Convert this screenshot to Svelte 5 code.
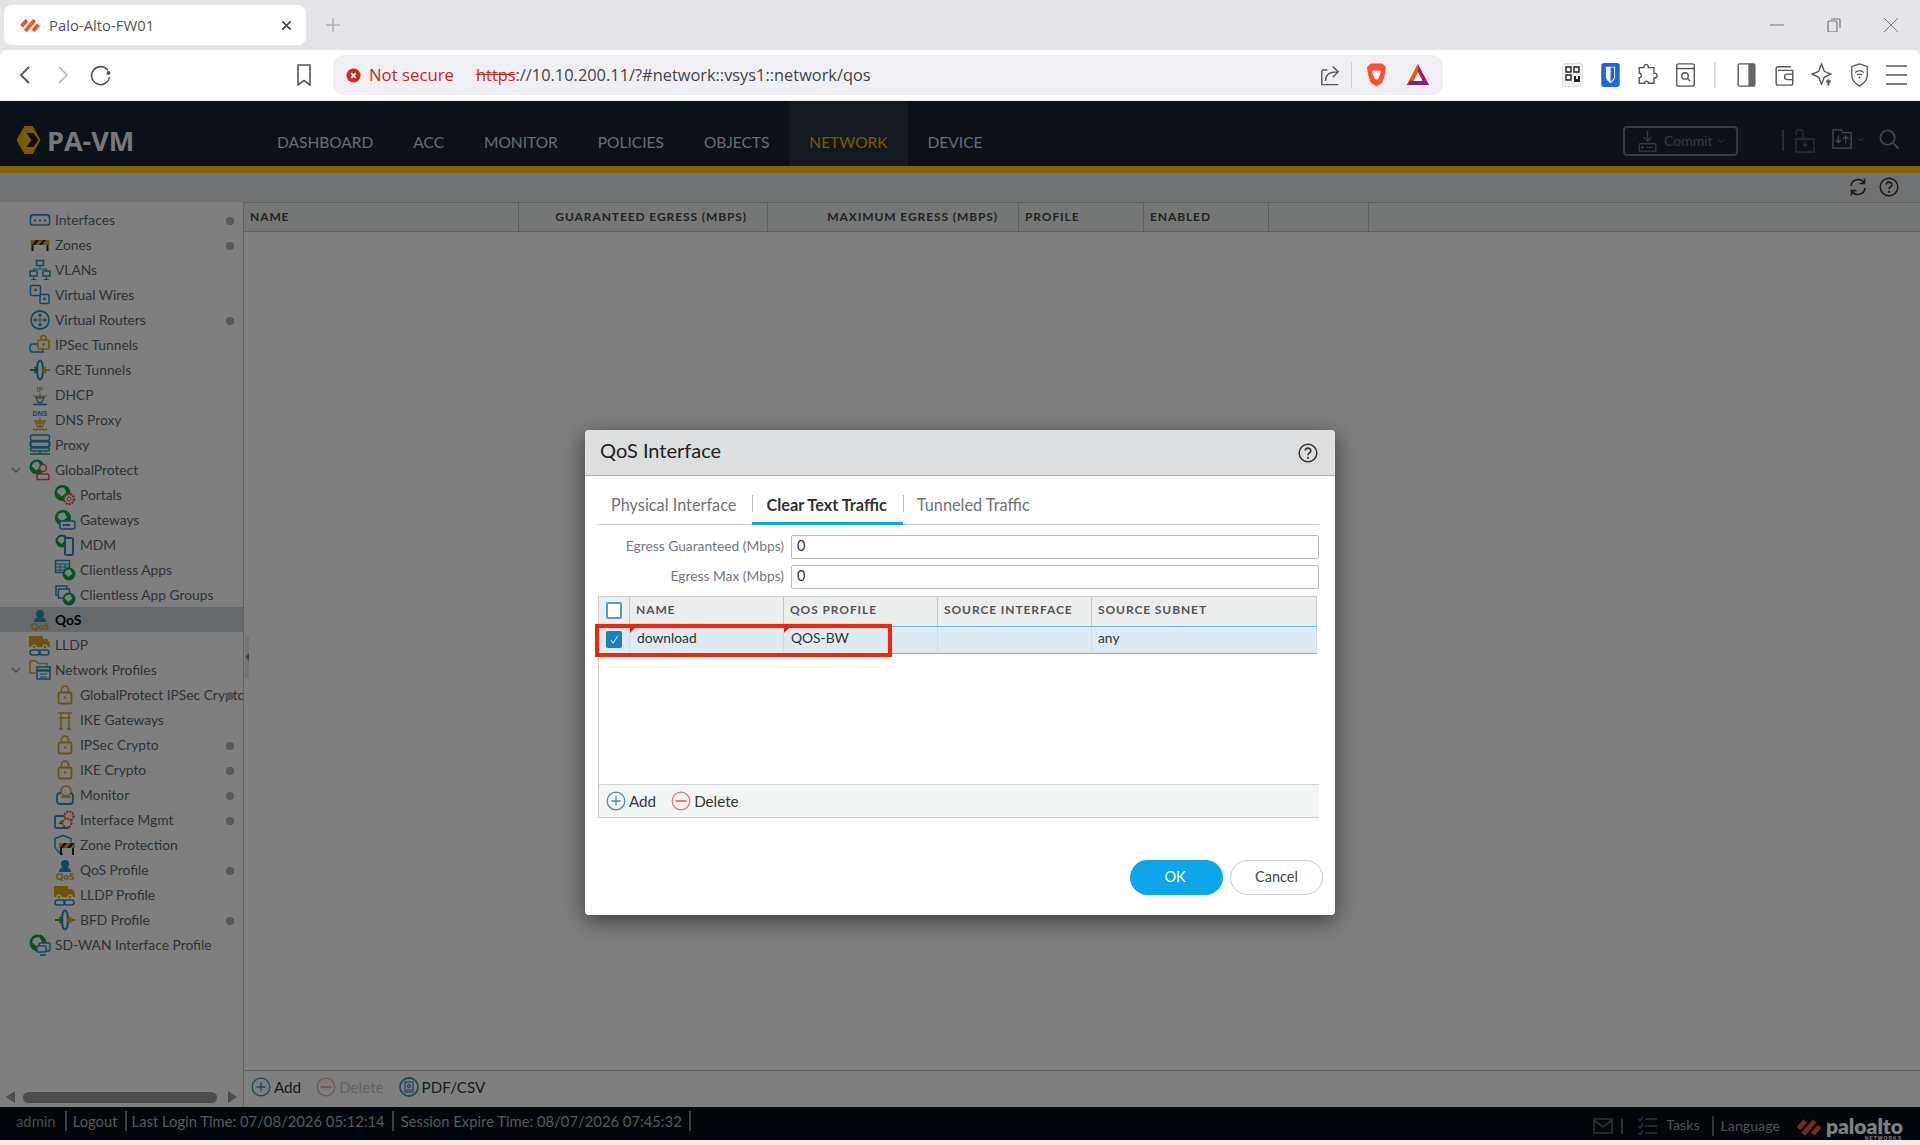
<script>
  const nav = ['DASHBOARD', 'ACC', 'MONITOR', 'POLICIES', 'OBJECTS', 'NETWORK', 'DEVICE'];

  // lvl 2 = enfants, dot = pastille grise à droite
  const tree = [
    { label: 'Interfaces', icon: 'iface', dot: true },
    { label: 'Zones', icon: 'zone', dot: true },
    { label: 'VLANs', icon: 'vlan' },
    { label: 'Virtual Wires', icon: 'vwire' },
    { label: 'Virtual Routers', icon: 'router', dot: true },
    { label: 'IPSec Tunnels', icon: 'ipsec' },
    { label: 'GRE Tunnels', icon: 'gre' },
    { label: 'DHCP', icon: 'dhcp' },
    { label: 'DNS Proxy', icon: 'dns' },
    { label: 'Proxy', icon: 'proxy' },
    { label: 'GlobalProtect', icon: 'gp', open: true },
    { label: 'Portals', icon: 'portal', lvl: 2 },
    { label: 'Gateways', icon: 'gateway', lvl: 2 },
    { label: 'MDM', icon: 'mdm', lvl: 2 },
    { label: 'Clientless Apps', icon: 'capps', lvl: 2 },
    { label: 'Clientless App Groups', icon: 'cgroups', lvl: 2 },
    { label: 'QoS', icon: 'qos', active: true },
    { label: 'LLDP', icon: 'lldp' },
    { label: 'Network Profiles', icon: 'nprof', open: true },
    { label: 'GlobalProtect IPSec Crypto', icon: 'lock', lvl: 2, dot: true },
    { label: 'IKE Gateways', icon: 'torii', lvl: 2 },
    { label: 'IPSec Crypto', icon: 'lock', lvl: 2, dot: true },
    { label: 'IKE Crypto', icon: 'lock', lvl: 2, dot: true },
    { label: 'Monitor', icon: 'monitor', lvl: 2, dot: true },
    { label: 'Interface Mgmt', icon: 'ifmgmt', lvl: 2, dot: true },
    { label: 'Zone Protection', icon: 'zprot', lvl: 2 },
    { label: 'QoS Profile', icon: 'qos', lvl: 2, dot: true },
    { label: 'LLDP Profile', icon: 'lldp', lvl: 2 },
    { label: 'BFD Profile', icon: 'gre', lvl: 2, dot: true },
    { label: 'SD-WAN Interface Profile', icon: 'sdwan' }
  ];

  const columns = [
    { label: 'NAME', cls: 'c-name' },
    { label: 'GUARANTEED EGRESS (MBPS)', cls: 'c-num' },
    { label: 'MAXIMUM EGRESS (MBPS)', cls: 'c-num2' },
    { label: 'PROFILE', cls: 'c-prof' },
    { label: 'ENABLED', cls: 'c-en' },
    { label: '', cls: 'c-empty' }
  ];

  const blue = '#2b8cc0', green = '#10a040', gold = '#d9a520', red = '#e0553a', ink = '#222';
</script>

{#snippet sideIcon(name)}
  <svg class="side-icon" viewBox="0 0 22 22" fill="none" stroke-width="1.5">
    {#snippet globe(cx, cy, r)}
      <circle {cx} {cy} r={r} fill={green} />
      <path d="M{cx - r * 0.7} {cy - r * 0.1}a{r * 0.7} {r * 0.7} 0 0 1 {r * 0.9} {-r * 0.55}l{r * 0.3} {r * 0.6}l{-r * 0.6} {r * 0.5}z" fill="#fff" />
    {/snippet}
    {#if name === 'iface'}
      <rect x="1.5" y="6" width="19" height="10" rx="1.5" stroke={blue} />
      <path d="M2 8.5l2-3h14l2 3" stroke={blue} stroke-width="1" />
      <path d="M5 11.5h2M10 11.5h2M15 11.5h2" stroke={blue} stroke-width="2" />
    {:else if name === 'zone'}
      <rect x="1.5" y="6" width="19" height="5" fill={gold} />
      <path d="M3 11l4-5h3l-4 5zM10 11l4-5h3l-4 5z" fill={ink} />
      <path d="M3.5 11v6M18.5 11v6" stroke={ink} stroke-width="2" />
    {:else if name === 'vlan'}
      <rect x="7.5" y="1.5" width="7" height="5" stroke={blue} />
      <rect x="1" y="12" width="7" height="5" stroke={blue} />
      <rect x="14" y="12" width="7" height="5" stroke={blue} />
      <path d="M11 6.5v3.5M4.5 12v-2h13v2M4.5 17v3M17.5 17v3M2 20.5h5M15 20.5h5" stroke={blue} stroke-width="1.2" />
    {:else if name === 'vwire'}
      <rect x="1.5" y="1.5" width="10" height="10" rx="1" stroke={blue} />
      <rect x="11" y="10.5" width="9" height="9" rx="1" stroke={blue} />
      <path d="M6.5 4l2 3h-4zM15.5 13l2 3h-4z" fill={blue} />
    {:else if name === 'router'}
      <circle cx="11" cy="11" r="9" stroke={blue} stroke-width="1.8" />
      <path d="M11 4l2.5 3h-5zM11 18l2.5-3h-5zM4 11l3-2.5v5zM18 11l-3-2.5v5z" fill={blue} />
      <path d="M11 6v10M6 11h10" stroke={blue} stroke-width="1" />
    {:else if name === 'ipsec'}
      <path d="M3 10h11v8H4a2.5 4 0 0 1-1-8z" stroke={blue} />
      <rect x="9" y="6" width="11" height="9" rx="1" fill="#fff" stroke={gold} />
      <path d="M12 6V4a2.5 2.5 0 0 1 5 0v2" stroke={gold} />
      <circle cx="14.5" cy="10.5" r="1.2" fill={gold} />
    {:else if name === 'gre'}
      <ellipse cx="11" cy="11" rx="3" ry="9.5" stroke={blue} stroke-width="2" />
      <path d="M1 11h7M5.5 8l3 3-3 3" stroke={green} stroke-width="1.8" />
      <path d="M21 11h-6M17 8l-3 3 3 3" stroke={gold} stroke-width="1.8" />
    {:else if name === 'dhcp'}
      <text x="11" y="7.5" class="ic-t" text-anchor="middle" fill={gold}>IP</text>
      <path d="M11 9v8M4 12h14" stroke={gold} stroke-width="1.2" />
      <path d="M7 13.5h8l-2 5h-4zM4 20.5h14" stroke={blue} stroke-width="1.3" />
    {:else if name === 'dns'}
      <text x="11" y="7" class="ic-t" text-anchor="middle" fill={blue}>DNS</text>
      <path d="M11 9v8M5 12h12M7 14h8l-2 4h-4zM4 20.5h14" stroke={gold} stroke-width="1.3" />
    {:else if name === 'proxy'}
      <rect x="1.5" y="1" width="19" height="5.5" rx="2" stroke={blue} />
      <rect x="1.5" y="7.5" width="19" height="5.5" rx="2" stroke={blue} stroke-width="2" />
      <rect x="1.5" y="14" width="19" height="3" rx="1.5" stroke={blue} />
      <path d="M1 20h20M11 17v3" stroke={green} stroke-width="1.5" />
    {:else if name === 'gp'}
      {@render globe(8, 8, 7.5)}
      <circle cx="14" cy="9" r="3.5" fill="#fff" stroke={red} />
      <path d="M8 20.5V17a2 2 0 0 1 2-2h8a2 2 0 0 1 2 2v3.5z" fill="#fff" stroke={red} />
    {:else if name === 'portal'}
      {@render globe(8.5, 9, 8)}
      <circle cx="15" cy="15" r="5" fill="#fff" stroke={red} stroke-width="2.4" stroke-dasharray="2 1" />
      <circle cx="15" cy="15" r="2" stroke={red} stroke-width="1" />
    {:else if name === 'gateway'}
      {@render globe(9, 9, 8)}
      <rect x="6" y="12" width="15" height="8" rx="2" fill="#fff" stroke={blue} />
      <path d="M9 16h7" stroke={blue} stroke-width="2" />
    {:else if name === 'mdm'}
      {@render globe(8, 7, 6.5)}
      <rect x="11" y="4" width="8" height="17" rx="1.5" fill="#fff" stroke={blue} stroke-width="2" />
    {:else if name === 'capps'}
      <rect x="1.5" y="1.5" width="14" height="12" fill="#fff" stroke={blue} />
      <path d="M1.5 5h14M1.5 8h14M1.5 11h14M6 5v8M11 5v8" stroke={blue} stroke-width="1" />
      {@render globe(15, 15, 6.5)}
    {:else if name === 'cgroups'}
      <rect x="2" y="2" width="11" height="9" fill="#fff" stroke={blue} />
      <rect x="4.5" y="5" width="11" height="9" fill="#fff" stroke={blue} />
      {@render globe(15, 15, 6.5)}
    {:else if name === 'qos'}
      <circle cx="11" cy="5" r="4" fill={blue} />
      <path d="M5 13c0-3.5 2.5-5 6-5s6 1.5 6 5z" fill={blue} />
      <text x="11" y="21" class="ic-q" text-anchor="middle" fill={gold}>QoS</text>
    {:else if name === 'lldp'}
      <path d="M0 2h14v11H0zM14 5h4l3 4v4h-7z" fill={gold} />
      <circle cx="5" cy="13" r="2" fill={gold} stroke="#fff" /><circle cx="16" cy="13" r="2" fill={gold} stroke="#fff" />
      <rect x="1" y="16" width="10" height="5" rx="2.5" stroke={blue} />
      <rect x="10" y="16" width="10" height="5" rx="2.5" stroke={blue} />
    {:else if name === 'nprof'}
      <path d="M1 2h6l2 2.5h9v4M1 2v12h6" stroke={gold} />
      <rect x="8" y="8" width="13" height="12" fill="#fff" stroke={blue} />
      <path d="M8 11.5h13" stroke={blue} stroke-width="2.5" />
      <path d="M11 15h7M11 18h7" stroke={blue} stroke-width="1.2" />
    {:else if name === 'lock'}
      <rect x="4.5" y="8.5" width="13" height="11" rx="1.5" stroke={gold} stroke-width="1.8" />
      <path d="M7.5 8.5v-3a3.5 3.5 0 0 1 7 0v3" stroke={gold} stroke-width="1.5" />
      <circle cx="11" cy="13.5" r="1.3" fill={gold} />
    {:else if name === 'torii'}
      <path d="M4 4h14M5 9h12M7 4v16M15 4v16M5 20h4M13 20h4" stroke={gold} stroke-width="1.4" />
    {:else if name === 'monitor'}
      <rect x="3" y="9" width="16" height="11" rx="3" stroke={blue} stroke-width="1.8" />
      <circle cx="12" cy="7" r="5" fill="#fff" stroke={gold} />
      <path d="M7 13h10" stroke={gold} />
    {:else if name === 'ifmgmt'}
      <rect x="1" y="7" width="14" height="12" rx="1.5" fill="#fff" stroke={blue} stroke-width="1.8" />
      <path d="M7 11l2.5 4h-5z" fill={blue} />
      <circle cx="15" cy="7" r="4.5" fill="#fff" stroke={red} stroke-width="2" stroke-dasharray="2 1" />
      <circle cx="13" cy="14" r="4.5" fill="#fff" stroke={red} stroke-width="2" stroke-dasharray="2 1" />
    {:else if name === 'zprot'}
      <path d="M9 1.5l8 3v4M9 1.5l-8 3v7c0 4 4 7 8 9" stroke={blue} stroke-width="1.5" />
      <rect x="5" y="9" width="16" height="5" fill={gold} />
      <path d="M6 14l4-5h3l-4 5zM13 14l4-5h3l-4 5z" fill={ink} />
      <path d="M7 14v7M19 14v7" stroke={ink} stroke-width="2" />
    {:else if name === 'sdwan'}
      {@render globe(9, 9, 8.5)}
      <rect x="10" y="9" width="11" height="8" rx="1" fill="#fff" stroke={blue} />
      <rect x="8" y="12" width="9" height="6" rx="1" fill="#fff" stroke={blue} />
      <path d="M11 21h6" stroke={blue} />
    {/if}
  </svg>
{/snippet}

{#snippet chevron(cls)}
  <svg class={cls} viewBox="0 0 20 20" fill="none" stroke="currentColor" stroke-width="1.4"><path d="M6 8l4 4 4-4" /></svg>
{/snippet}

{#snippet paloMark(cls)}
  <svg class={cls} viewBox="0 0 26 22" fill="none" stroke="#f0572c" stroke-width="5">
    <path d="M2 12l7-8M7 18L19 4M17 18l7-8" />
  </svg>
{/snippet}

{#snippet help(cls)}
  <svg class={cls} viewBox="0 0 20 20" fill="none" stroke="currentColor" stroke-width="1.5">
    <circle cx="10" cy="10" r="8.8" />
    <path d="M7.2 7.6a2.8 2.6 0 1 1 4.2 2.3c-.9.6-1.4 1-1.4 2.3" stroke-width="1.7" />
    <circle cx="10" cy="14.8" r="1.1" fill="currentColor" stroke="none" />
  </svg>
{/snippet}

{#snippet roundAdd(cls)}
  <svg class={cls} viewBox="0 0 20 20" fill="none" stroke="#3f8fb8" stroke-width="1.3">
    <circle cx="10" cy="10" r="8.8" /><path d="M10 5.5v9M5.5 10h9" />
  </svg>
{/snippet}

{#snippet roundDelete(cls)}
  <svg class={cls} viewBox="0 0 20 20" fill="none" stroke="#e07a7a" stroke-width="1.3">
    <circle cx="10" cy="10" r="8.8" /><path d="M4.5 10h11" stroke-width="1.8" />
  </svg>
{/snippet}

<div class="page">
  <div class="tabstrip">
    <div class="tab">
      {@render paloMark('favicon')}
      <span class="tab-title">Palo-Alto-FW01</span>
      <svg class="tab-close" viewBox="0 0 12 12" stroke="#444" stroke-width="1.8"><path d="M1.5 1.5l9 9M10.5 1.5l-9 9" /></svg>
    </div>
    <svg class="tab-new" viewBox="0 0 14 14" stroke="#b0b0b6" stroke-width="1.5"><path d="M7 0v14M0 7h14" /></svg>
    <div class="win-controls">
      <svg viewBox="0 0 14 14" stroke="#77777c"><path d="M0 7h14" /></svg>
      <svg viewBox="0 0 14 14" fill="none" stroke="#77777c" stroke-width="1.2"><rect x="1" y="3" width="9" height="11" rx="1.5" /><path d="M4 1h8a1 1 0 0 1 1 1v8" /></svg>
      <svg viewBox="0 0 14 14" stroke="#77777c"><path d="M0 0l14 14M14 0L0 14" /></svg>
    </div>
  </div>

  <div class="toolbar">
    <svg class="tb-ic back" viewBox="0 0 12 20" fill="none" stroke="#555" stroke-width="1.8"><path d="M10 2l-8 8 8 8" /></svg>
    <svg class="tb-ic fwd" viewBox="0 0 12 20" fill="none" stroke="#b5b5b8" stroke-width="1.6"><path d="M2 2l8 8-8 8" /></svg>
    <svg class="tb-ic reload" viewBox="0 0 22 22" fill="none" stroke="#555" stroke-width="1.6"><path d="M18 6.5A9 9 0 1 0 19.5 13" /><circle cx="18.5" cy="9" r="2" fill="#555" stroke="none" /></svg>
    <svg class="tb-ic bookmark" viewBox="0 0 16 22" fill="none" stroke="#555" stroke-width="1.6"><path d="M2 1h12v20l-6-4.5L2 21z" /></svg>

    <div class="urlbar">
      <svg class="err" viewBox="0 0 16 16"><circle cx="8" cy="8" r="7.5" fill="#cf2b20" /><path d="M5.5 5.5l5 5M10.5 5.5l-5 5" stroke="#fff" stroke-width="1.8" /></svg>
      <span class="not-secure">Not secure</span>
      <span class="url"><s>https</s>://10.10.200.11/?#network::vsys1::network/qos</span>
      <svg class="tb-ic share" viewBox="0 0 22 24" fill="none" stroke="#555" stroke-width="1.5"><path d="M8 6H3a2 2 0 0 0-1 1.5V22h18M6 18c0-7 4-10 13-10M14 2l6 6-6 6" /></svg>
      <span class="url-sep"></span>
      <svg class="tb-ic lion" viewBox="0 0 22 26"><path d="M5 1h12l4 4-1.500 9L17 21l-6 4-6-4-2.500-7L1 5z" fill="#fb542b" /><path d="M6 9l3-1 2 1 2-1 3 1-2 5-1 3-2 1-2-1-1-3z" fill="#fff" /></svg>
      <svg class="tb-ic bat" viewBox="0 0 24 24"><path d="M12 1l11 21H1z" fill="#9e1f63" /><path d="M12 1L1 22h4l7-13z" fill="#ff5000" /><path d="M1 22h22l-2.5-4H4z" fill="#662d91" /><path d="M12 9l4.5 9h-9z" fill="#fff" /></svg>
    </div>

    <div class="extensions">
      <svg class="tb-ic" viewBox="0 0 21 24"><rect x="0.5" y="0.5" width="20" height="23" rx="2" fill="#f2f2f2" stroke="#ddd" /><path d="M4 4h5v5H4zM12 4h5v5h-5zM4 12h5v5H4z" fill="none" stroke="#222" stroke-width="1.4" /><path d="M12 13h2v3h2v-3h2v6h-6z" fill="#222" /></svg>
      <svg class="tb-ic" viewBox="0 0 20 26"><rect width="20" height="26" rx="3" fill="#1e66e0" /><path d="M5 4h10v11c0 3-2.5 5-5 7-2.5-2-5-4-5-7z" fill="#fff" /><path d="M10 5h4v10c0 2-2 4-4 5.5z" fill="#1e66e0" /></svg>
      <svg class="tb-ic" viewBox="0 0 22 26" fill="none" stroke="#555" stroke-width="1.5"><path d="M8 2c2-1 4 0 4 3h6v6c3 0 4 2 3 4s-3 1-3 1v6h-6c0-3-4-3-4 0H2v-6c3 0 3-5 0-5V5h5c0-1 0-2 1-3z" /></svg>
      <svg class="tb-ic" viewBox="0 0 21 26" fill="none" stroke="#555" stroke-width="1.5"><rect x="1" y="1" width="19" height="24" rx="2" /><path d="M1 6h19" /><circle cx="10" cy="14" r="3.5" /><path d="M12.5 16.5l3 3" /></svg>
      <span class="ext-sep"></span>
      <svg class="tb-ic" viewBox="0 0 20 26"><rect x="1" y="1" width="18" height="24" rx="1.5" fill="#fff" stroke="#555" stroke-width="1.5" /><rect x="12" y="1" width="7" height="24" fill="#666" /></svg>
      <svg class="tb-ic" viewBox="0 0 20 26" fill="none" stroke="#555" stroke-width="1.5"><path d="M17 4H3a2 2 0 0 0-2 2v16a2 2 0 0 0 2 2h14a2 2 0 0 0 2-2V8H3" /><path d="M19 12h-6a2.5 2.5 0 0 0 0 6h6" /></svg>
      <svg class="tb-ic" viewBox="0 0 22 26" fill="none" stroke="#555" stroke-width="1.5"><path d="M11 1l3 8 7 3-7 3.5-3 7.5-3-7.5L1 12l7-3z" /><path d="M16 20h5M18.5 17.5v7" stroke-width="2" /></svg>
      <svg class="tb-ic" viewBox="0 0 20 28" fill="none" stroke="#555" stroke-width="1.5"><path d="M10 1l9 3v11c0 6-4 9-9 12-5-3-9-6-9-12V4z" /><path d="M5 11c3-2.5 7-2.5 10 0M7 14c2-1.5 4-1.5 6 0" /><circle cx="10" cy="17" r="1.2" fill="#555" stroke="none" /></svg>
      <svg class="tb-ic" viewBox="0 0 21 24" fill="none" stroke="#555" stroke-width="1.6"><path d="M0 3h21M0 12h21M0 21h21" /></svg>
    </div>
  </div>

  <div class="app">
    <header class="mast">
      <div class="brand">
        <svg class="brand-mark" viewBox="0 0 24 28"><path d="M8 0h8l8 14-8 14H8l-8-14z" fill="#f2b705" /><path d="M10 7h7l5 7-5 7h-7l5-7z" fill="#182030" /></svg>
        <span class="brand-name">PA-VM</span>
      </div>
      <nav class="main-nav">
        {#each nav as item}
          <span class="nav-item" class:active={item === 'NETWORK'}>{item}</span>
        {/each}
      </nav>
      <div class="mast-right">
        <div class="commit">
          <svg class="commit-ic" viewBox="0 0 20 24" fill="none" stroke="#6c7278" stroke-width="1.5"><rect x="1" y="15" width="18" height="8" rx="1" /><path d="M10 1v10M6 8l4 4 4-4M8 19h8" /><circle cx="4.5" cy="19" r="1" /></svg>
          <span>Commit</span>
          {@render chevron('commit-caret')}
        </div>
        <span class="mast-sep"></span>
        <svg class="lock-ic" viewBox="0 0 20 24" fill="none" stroke="#555c63" stroke-width="1.5"><rect x="1" y="10" width="18" height="13" /><path d="M1 6V4a3.5 3.5 0 0 1 7 0v6" /><circle cx="10" cy="16" r="1.2" fill="#555c63" /></svg>
        <svg class="cfg-ic" viewBox="0 0 24 22" fill="none" stroke="#8a9096" stroke-width="1.5"><path d="M1 1h9l2 3h9v17H1zM7 7v8M4 12l3 3 3-3M15 16V8M12 11l3-3 3 3" /></svg>
        {@render chevron('cfg-caret')}
        <svg class="search-ic" viewBox="0 0 22 22" fill="none" stroke="#8a9096" stroke-width="1.8"><circle cx="9" cy="9" r="7.5" /><path d="M14.5 14.5l6 6" /></svg>
      </div>
    </header>
    <div class="gold-line"></div>

    <div class="subbar">
      <svg class="sub-ic" viewBox="0 0 20 20" fill="none" stroke="#333" stroke-width="1.7"><path d="M3 9a7 7 0 0 1 13-3M17 11a7 7 0 0 1-13 3M16.5 1.5v5h-5M3.5 18.5v-5h5" /></svg>
      {@render help('sub-help')}
    </div>

    <div class="main">
      <aside class="sidebar">
        <ul class="tree">
          {#each tree as node}
            <li class="node" class:active={node.active} class:lvl2={node.lvl === 2}>
              <span class="caret">
                {#if node.open}{@render chevron('caret-ic')}{/if}
              </span>
              {@render sideIcon(node.icon)}
              <span class="node-label">{node.label}</span>
              {#if node.dot}<i class="dot"></i>{/if}
            </li>
          {/each}
        </ul>
        <div class="hscroll">
          <i class="arrow left"></i>
          <i class="thumb"></i>
          <i class="arrow right"></i>
        </div>
        <i class="handle"></i>
      </aside>

      <section class="content">
        <div class="thead">
          {#each columns as col}
            <div class="th {col.cls}">{col.label}</div>
          {/each}
        </div>
        <div class="tbody"></div>
        <div class="content-tools">
          <span class="tool">{@render roundAdd('tool-ic')}Add</span>
          <span class="tool disabled">{@render roundDelete('tool-ic')}Delete</span>
          <span class="tool">
            <svg class="tool-ic" viewBox="0 0 20 20" fill="none" stroke="#3f8fb8" stroke-width="1.3"><circle cx="10" cy="10" r="9" stroke-width="1.8" /><rect x="6" y="5" width="8" height="10" /><circle cx="10" cy="9" r="1.5" /><path d="M7 13h6" /></svg>
            PDF/CSV
          </span>
        </div>
      </section>
    </div>

    <footer class="status">
      <span class="st-user">admin</span>
      <span class="st-item">Logout</span>
      <span class="st-item">Last Login Time: 07/08/2026 05:12:14</span>
      <span class="st-item st-last">Session Expire Time: 08/07/2026 07:45:32</span>
      <div class="st-right">
        <svg class="mail" viewBox="0 0 20 16" fill="none" stroke="#5a6168" stroke-width="1.6"><rect x="1" y="1" width="18" height="14" /><path d="M1 2l9 7 9-7" /></svg>
        <i class="st-bar"></i>
        <svg class="tasks" viewBox="0 0 20 18" fill="none" stroke="#5a6168" stroke-width="1.4"><path d="M8 2h12M8 9h12M8 16h12" /><path d="M1 2l2 2 3-4M1 9l2 2 3-4M1 16l2 2 3-4" stroke="#4a6a90" /></svg>
        <span class="st-tasks">Tasks</span>
        <i class="st-bar bar2"></i>
        <span class="st-lang">Language</span>
        {@render paloMark('pa-mark')}
        <span class="pa-word">paloalto<small>NETWORKS</small></span>
      </div>
    </footer>

    <!-- Voile du modal + fenêtre QoS Interface -->
    <div class="overlay">
      <div class="dialog">
        <div class="dlg-head">
          <h2>QoS Interface</h2>
          {@render help('dlg-help')}
        </div>
        <div class="dlg-body">
          <div class="tabs">
            <span class="dtab">Physical Interface</span>
            <span class="dtab current">Clear Text Traffic</span>
            <span class="dtab">Tunneled Traffic</span>
          </div>

          <div class="form">
            <label for="eg">Egress Guaranteed (Mbps)</label>
            <input id="eg" value="0" />
            <label for="em">Egress Max (Mbps)</label>
            <input id="em" value="0" />
          </div>

          <div class="grid-wrap">
            <div class="grid-head">
              <div class="g-check"><i class="cb"></i></div>
              <div class="g-name">NAME</div>
              <div class="g-prof">QOS PROFILE</div>
              <div class="g-src">SOURCE INTERFACE</div>
              <div class="g-sub">SOURCE SUBNET</div>
            </div>
            <div class="grid-row">
              <div class="g-check">
                <i class="cb checked">
                  <svg viewBox="0 0 16 18" fill="none" stroke="#fff" stroke-width="1.3"><path d="M4 10l3 4 6-10" /></svg>
                </i>
              </div>
              <div class="g-name dirty">download</div>
              <div class="g-prof dirty">QOS-BW</div>
              <div class="g-src"></div>
              <div class="g-sub">any</div>
            </div>
            <div class="grid-empty"></div>
            <div class="grid-tools">
              <span class="tool">{@render roundAdd('tool-ic')}Add</span>
              <span class="tool">{@render roundDelete('tool-ic')}Delete</span>
            </div>
            <div class="annotation"></div>
          </div>

          <div class="dlg-foot">
            <button class="btn ok">OK</button>
            <button class="btn cancel">Cancel</button>
          </div>
        </div>
      </div>
    </div>
  </div>
</div>

<style>
  :global(body) {
    margin: 0;
    background: #f6e8e2;
    font-family: Lato, "Open Sans", sans-serif;
  }

  .page {
    width: 1920px;
    height: 1145px;
    overflow: hidden;
    display: flex;
    flex-direction: column;
  }

  /* Navigateur */
  .tabstrip {
    height: 50px;
    background: #e4e4e9;
    display: flex;
    align-items: flex-start;
    flex: none;
  }
  .tab {
    margin: 5px 0 0 4px;
    width: 302px;
    height: 40px;
    background: #fff;
    border-radius: 8px;
    display: flex;
    align-items: center;
    box-sizing: border-box;
    padding: 0 14px 0 16px;
  }
  .favicon { width: 20px; height: 17px; }
  .tab-title {
    margin-left: 9px;
    font: 15px "Open Sans", sans-serif;
    color: #555;
    flex: 1;
    transform: scaleX(.99);
    transform-origin: left;
  }
  .tab-close { width: 11px; height: 11px; }
  .tab-new { width: 14px; height: 14px; margin: 18px 0 0 20px; }
  .win-controls {
    margin-left: auto;
    margin-top: 18px;
    padding-right: 22px;
    display: flex;
    gap: 43px;
  }
  .win-controls svg { width: 14px; height: 14px; }

  .toolbar {
    height: 50px;
    flex: none;
    background: #fff;
    border-radius: 8px 8px 0 0;
    display: flex;
    align-items: center;
    border-bottom: 1px solid #e9e9ee;
  }
  .tb-ic { flex: none; }
  .back { width: 12px; height: 20px; margin-left: 19px; }
  .fwd { width: 12px; height: 20px; margin-left: 26px; }
  .reload { width: 22px; height: 22px; margin-left: 21px; }
  .bookmark { width: 16px; height: 22px; margin-left: 184px; }
  .urlbar {
    margin-left: 21px;
    width: 1110px;
    height: 40px;
    background: #f0f0f4;
    border-radius: 10px;
    display: flex;
    align-items: center;
    padding-left: 13px;
    box-sizing: border-box;
    font: 17px "Open Sans", sans-serif;
  }
  .err { width: 15px; height: 15px; flex: none; }
  .not-secure { margin: -2px 0 0 8px; color: #c9261c; width: 107px; flex: none; transform: scaleX(.985); transform-origin: left; }
  .url { margin-top: -2px; color: #444; flex: none; width: 841px; white-space: nowrap; transform: scaleX(.963); transform-origin: left; }
  .url s { color: #c9261c; }
  .share { width: 20px; height: 23px; margin-left: 3px; }
  .url-sep { width: 1px; height: 26px; background: #cfcfd4; margin: 0 14px 0 11px; }
  .lion { width: 21px; height: 26px; }
  .bat { width: 24px; height: 24px; margin-left: 19px; }
  .extensions {
    margin-left: 119px;
    display: flex;
    align-items: center;
    gap: 16.6px;
  }
  .extensions svg { width: 21px; height: 24px; }
  .ext-sep { width: 2px; height: 26px; background: #dcdce2; margin: 0 3px 0 2px; }

  /* Application PAN-OS */
  .app {
    position: relative;
    height: 1039px;
    flex: none;
    display: flex;
    flex-direction: column;
    background: #fff;
  }
  .mast {
    height: 65px;
    flex: none;
    background: #182030;
    display: flex;
    align-items: stretch;
  }
  .brand { display: flex; align-items: center; width: 257px; padding: 13px 0 0 16px; box-sizing: border-box; }
  .brand-mark { width: 25px; height: 28px; }
  .brand-name { margin: 0 0 0 6px; font: 700 27px "Open Sans", sans-serif; color: #eee; }
  .main-nav { display: flex; }
  .nav-item {
    padding: 16px 20px 0;
    display: flex;
    align-items: center;
    font-size: 15.5px;
    color: #cfd9e6;
  }
  .nav-item.active { background: #28303e; color: #f4b800; }
  .mast-right { margin-left: auto; display: flex; align-items: center; padding: 12px 20px 0 0; }
  .commit {
    width: 115px;
    height: 30px;
    box-sizing: border-box;
    border: 2px solid #6c7278;
    border-radius: 4px;
    display: flex;
    align-items: center;
    padding-left: 13px;
    font-size: 14px;
    color: #6c7278;
    margin-top: 2px;
  }
  .commit-ic { width: 19px; height: 22px; margin-right: 7px; }
  .commit-caret { width: 14px; height: 14px; margin-left: 1px; color: #6c7278; }
  .mast-sep { width: 2px; height: 21px; background: #555c63; margin: 2px 0 0 44px; }
  .lock-ic { width: 20px; height: 24px; margin: 2px 0 0 11px; }
  .cfg-ic { width: 22px; height: 20px; margin: -2px 0 0 17px; }
  .cfg-caret { width: 13px; height: 13px; color: #8a9096; }
  .search-ic { width: 21px; height: 21px; margin: 0 0 0 12px; }
  .gold-line { height: 7px; flex: none; background: #ffc800; }

  .subbar {
    height: 29px;
    flex: none;
    background: #e2e4e6;
    display: flex;
    align-items: center;
    justify-content: flex-end;
    gap: 11px;
    padding: 0 21px 2px 0;
    box-sizing: border-box;
    color: #333;
  }
  .sub-ic { width: 20px; height: 20px; }
  .sub-help { width: 20px; height: 20px; }

  .main { flex: 1; display: flex; min-height: 0; background: #fff; }
  .sidebar {
    position: relative;
    width: 243px;
    flex: none;
    display: flex;
    flex-direction: column;
    padding-top: 5px;
    box-sizing: border-box;
    background: #fff;
  }
  .tree { list-style: none; margin: 0; padding: 0; overflow: hidden; }
  .node {
    position: relative;
    display: flex;
    align-items: center;
    height: 25px;
    padding-left: 8px;
    color: #5c646b;
    font-size: 13.8px;
    white-space: nowrap;
  }
  .node.active { background: #ccd2d6; color: #000; font-weight: 700; }
  .caret { width: 22px; flex: none; display: flex; align-items: center; color: #888; margin-left: -1px; }
  .caret-ic { width: 20px; height: 20px; margin-left: -1px; }
  .lvl2 .caret { width: 47px; }
  .side-icon { width: 22px; height: 22px; flex: none; }
  .node-label { margin-left: 4px; }
  .ic-t { font: 700 7px "Liberation Sans", sans-serif; }
  .ic-q { font: 800 9.5px Lato, sans-serif; }
  .dot {
    position: absolute;
    right: 9px;
    top: 10px;
    width: 8px;
    height: 8px;
    border-radius: 50%;
    background: #b0b0b0;
  }
  .hscroll {
    margin-top: auto;
    height: 20px;
    flex: none;
    display: flex;
    align-items: center;
    padding-left: 6px;
    box-sizing: border-box;
  }
  .thumb { width: 194px; height: 11px; border-radius: 6px; background: #9a9a9a; margin: 0 11px 0 8px; }
  .arrow { width: 0; height: 0; border-top: 6px solid transparent; border-bottom: 6px solid transparent; }
  .arrow.left { border-right: 9px solid #9a9a9a; }
  .arrow.right { border-left: 9px solid #9a9a9a; }
  .handle {
    position: absolute;
    left: 245px;
    top: 434px;
    width: 4px;
    height: 42px;
    background: #e8e8e8;
  }
  .handle::after {
    content: '';
    position: absolute;
    left: 0;
    top: 17px;
    border-top: 4px solid transparent;
    border-bottom: 4px solid transparent;
    border-right: 4px solid #888;
  }

  .content { flex: 1; display: flex; flex-direction: column; border-left: 1px solid #c4c6c8; }
  .thead {
    height: 30px;
    flex: none;
    display: flex;
    background: #eaeeee;
    border-top: 1px solid #bdbfc0;
    border-bottom: 1px solid #bdbfc0;
    box-sizing: border-box;
  }
  .th {
    box-sizing: border-box;
    border-right: 1px solid #bdbfc0;
    display: flex;
    align-items: center;
    font-size: 12px;
    font-weight: 700;
    letter-spacing: .9px;
    color: #444;
    padding: 0 6px 2px;
    white-space: nowrap;
  }
  .c-name { width: 275px; }
  .c-num { width: 249px; justify-content: flex-end; padding-right: 20px; }
  .c-num2 { width: 251px; justify-content: flex-end; padding-right: 20px; }
  .c-prof { width: 125px; }
  .c-en { width: 125px; }
  .c-empty { width: 100px; }
  .tbody { flex: 1; background: #fff; }
  .content-tools {
    height: 37px;
    flex: none;
    border-top: 1px solid #c4c6c8;
    box-sizing: border-box;
    display: flex;
    align-items: center;
    padding: 0 0 4px 7px;
    gap: 15px;
    background: #fff;
  }
  .tool {
    display: inline-flex;
    align-items: center;
    gap: 3px;
    font-size: 15.2px;
    color: #333;
  }
  .tool.disabled { color: #aaa; opacity: .65; }
  .tool-ic { width: 20px; height: 20px; }

  .status {
    height: 33px;
    flex: none;
    background: #040c14;
    display: flex;
    align-items: center;
    padding: 0 0 5px 16px;
    box-sizing: border-box;
    font-size: 14.8px;
    color: #a8aeb4;
  }
  .st-user { margin-right: 9px; color: #8a9096; }
  .st-item { border-left: 2px solid #787d82; padding: 0 7px 0 6px; line-height: 20px; }
  .st-item:nth-child(3) { padding-left: 5px; }
  .st-last { border-right: 2px solid #787d82; padding-left: 7px; }
  .st-right { margin-left: auto; padding: 5px 17px 0 0; margin-bottom: -5px; display: flex; align-items: center; color: #9aa0a6; font-size: 14.2px; }
  .mail { width: 20px; height: 16px; margin-right: 2px; }
  .st-bar { width: 2px; height: 15px; background: #666; margin: 0 14px 0 6px; }
  .tasks { width: 20px; height: 18px; margin-right: 3px; }
  .st-tasks { margin: -3px 12px 0 6px; }
  .bar2 { margin: 0 7px 0 0; height: 20px; }
  .st-lang { margin-top: -2px; }
  .pa-mark { width: 26px; height: 21px; margin: 3px 0 0 16px; }
  .pa-word {
    position: relative;
    margin: -1px 0 0 4px;
    font: 800 21px/21px Lato, sans-serif;
    color: #fff;
  }
  .pa-word small {
    position: absolute;
    right: 1px;
    top: 21px;
    font: 700 5px/5px "Liberation Sans", sans-serif;
    letter-spacing: 1px;
  }

  /* Modal */
  .overlay {
    position: absolute;
    inset: 0;
    background: rgba(0, 0, 0, .5);
    display: flex;
    justify-content: center;
    align-items: flex-start;
    padding-top: 329px;
    box-sizing: border-box;
  }
  .dialog {
    width: 750px;
    height: 485px;
    background: #fff;
    border-radius: 4px;
    box-shadow: 0 6px 22px rgba(0, 0, 0, .55);
    display: flex;
    flex-direction: column;
    overflow: hidden;
  }
  .dlg-head {
    height: 46px;
    flex: none;
    box-sizing: border-box;
    background: #dcdee0;
    border-bottom: 1px solid #a8aaac;
    display: flex;
    align-items: center;
    justify-content: space-between;
    padding: 0 17px 0 15px;
  }
  .dlg-head h2 { margin: -5px 0 0; font-size: 20px; font-weight: 400; color: #222; }
  .dlg-help { width: 20px; height: 20px; color: #333; margin-top: 1px; }
  .dlg-body { flex: 1; padding: 0 16px 0 13px; display: flex; flex-direction: column; }
  .tabs {
    height: 49px;
    flex: none;
    box-sizing: border-box;
    display: flex;
    align-items: flex-end;
    border-bottom: 1px solid #c6c8ca;
  }
  .dtab {
    position: relative;
    height: 34px;
    box-sizing: border-box;
    padding: 5px 16px 0 14px;
    font-size: 16.3px;
    color: #6f7478;
    display: flex;
    align-items: flex-start;
  }
  .dtab:first-child { padding-left: 13px; }
  .dtab + .dtab::before {
    content: '';
    position: absolute;
    left: 0;
    top: 5px;
    width: 1px;
    height: 17px;
    background: #bbb;
  }
  .dtab.current {
    color: #333;
    font-weight: 700;
    border-bottom: 3px solid #0ea5e9;
    margin-bottom: -1px;
    height: 35px;
  }
  .form {
    margin-top: 10px;
    display: grid;
    grid-template-columns: 186px 1fr;
    column-gap: 7px;
    row-gap: 6px;
    align-items: center;
  }
  .form label { text-align: right; font-size: 13.8px; color: #73787c; margin-top: -4px; }
  .form input {
    height: 24px;
    box-sizing: border-box;
    border: 1px solid #b8babc;
    border-radius: 2px;
    padding: 0 5px 3px;
    font: 14.5px Lato, sans-serif;
    color: #333;
    outline: none;
    margin: 0;
    width: 100%;
  }
  .grid-wrap {
    position: relative;
    margin-top: 7px;
    border-left: 1px solid #ccc;
  }
  .grid-head, .grid-row { display: flex; }
  .grid-head {
    height: 30px;
    box-sizing: border-box;
    width: 718px;
    background: #eceeee;
    border-top: 1px solid #ccc;
    font-size: 12px;
    font-weight: 700;
    letter-spacing: .9px;
    color: #555;
  }
  .grid-head > div, .grid-row > div {
    box-sizing: border-box;
    display: flex;
    align-items: center;
    padding: 0 0 5px 6px;
    border-right: 1px solid #c4c6c8;
  }
  .grid-row {
    height: 28px;
    box-sizing: border-box;
    width: 718px;
    background: #deebf3;
    border-top: 1px solid #6cb4dc;
    border-bottom: 1px solid #6cb4dc;
    font-size: 13.8px;
    color: #333;
  }
  .grid-row > div { border-right-color: #d4dde2; }
  .g-check { width: 31px; padding-left: 7px !important; padding-bottom: 3px !important; }
  .g-name { width: 154px; }
  .g-prof { width: 154px; }
  .g-src { width: 154px; }
  .g-sub { width: 225px; }
  .cb {
    width: 16px;
    height: 17px;
    box-sizing: border-box;
    border: 2px solid #4a9fd0;
    border-radius: 2px;
    background: #fff;
    display: block;
  }
  .cb.checked { background: #1a80bb; border-color: #1a80bb; margin-top: 2px; }
  .cb svg { display: block; width: 12px; height: 13px; }
  .dirty { position: relative; padding-left: 7px !important; }
  .dirty::before {
    content: '';
    position: absolute;
    left: 0;
    top: 0;
    border-top: 6px solid #d4201a;
    border-right: 6px solid transparent;
  }
  .grid-empty { height: 130px; }
  .grid-tools {
    height: 34px;
    box-sizing: border-box;
    background: #f4f6f6;
    border-top: 1px solid #d2d4d6;
    border-bottom: 1px solid #c8cacc;
    display: flex;
    align-items: center;
    padding-left: 7px;
    gap: 15px;
  }
  .annotation {
    position: absolute;
    left: -4px;
    top: 28px;
    width: 297px;
    height: 33px;
    box-sizing: border-box;
    border: 4px solid #fb2200;
  }
  .dlg-foot { margin-top: 42px; display: flex; justify-content: flex-end; gap: 7px; margin-right: -4px; }
  .btn {
    width: 93px;
    height: 35px;
    border-radius: 18px;
    font: 14.5px Lato, sans-serif;
    padding: 0 0 3px;
    box-sizing: border-box;
  }
  .ok { background: #0ea5e9; border: none; color: #fff; margin-left: -1px; padding-right: 3px; }
  .cancel { background: #fff; border: 1px solid #c7c9cb; color: #444; }
</style>
